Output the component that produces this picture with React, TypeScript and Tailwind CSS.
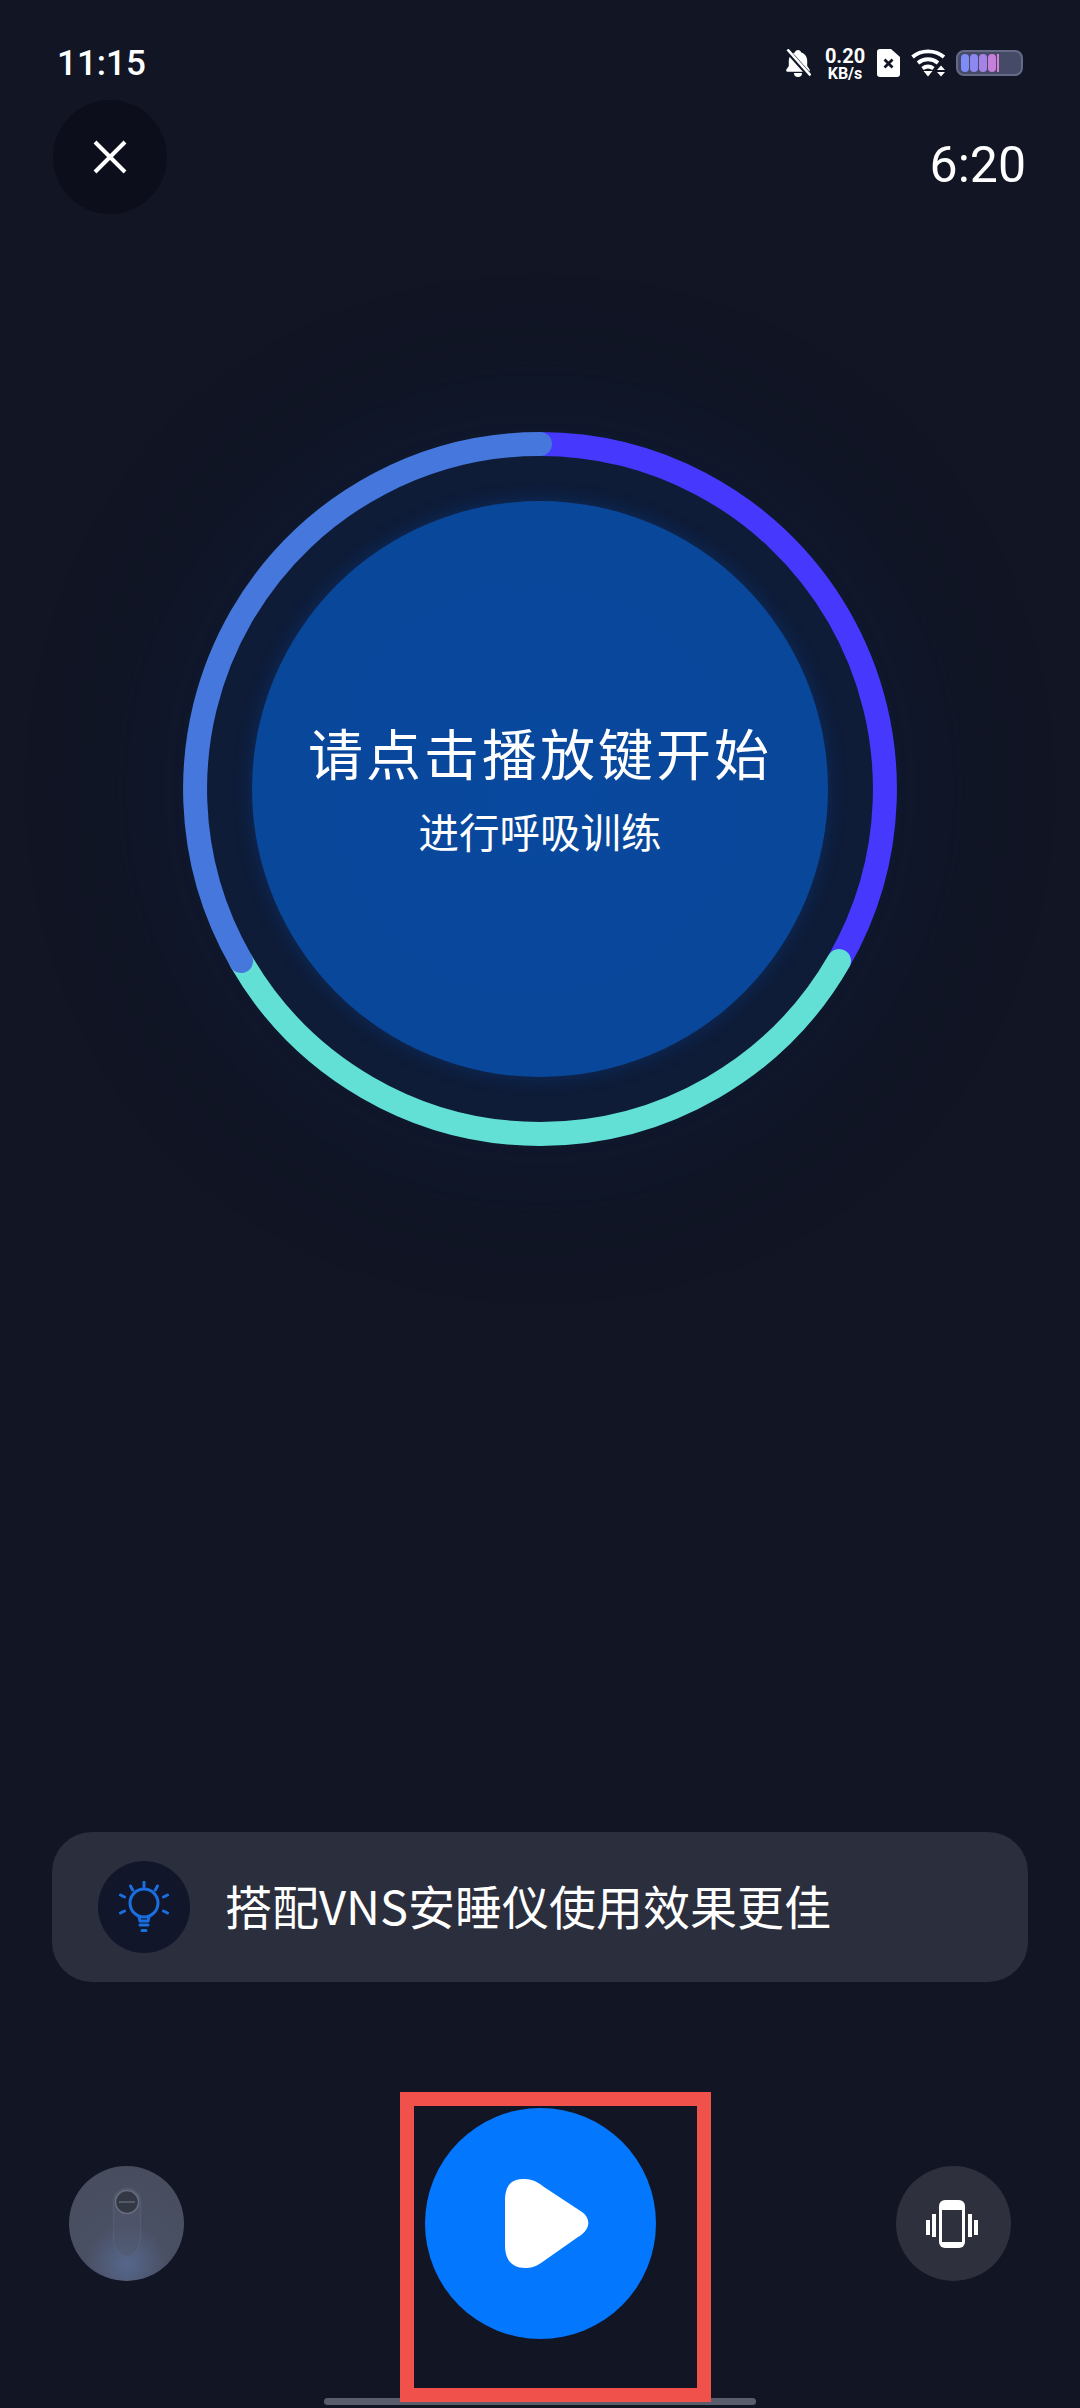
import React from "react";

const CJK = "font-['Noto_Sans_CJK_SC','Noto_Sans',sans-serif]";

function BellOff() {
  return (
    <svg width="26" height="28" viewBox="0 0 26 28" className="text-white">
      <path
        d="M13 1c-1.600 0-2.800 1-3.200 2.400C5.800 4.600 3.800 8 3.800 12v5L1.400 20.500c-.7 1 0 2.300 1.100 2.300h21c1.100 0 1.800-1.300 1.100-2.300L22.200 17v-5c0-4-2-7.400-6-8.600C15.800 2 14.600 1 13 1z"
        fill="currentColor"
      />
      <path d="M9 24a4 4 0 0 0 8 0z" fill="currentColor" />
      <path d="M1 0l24 27" stroke="#111524" strokeWidth="5" />
      <path d="M2.500 0.500l23 26" stroke="currentColor" strokeWidth="2.600" />
    </svg>
  );
}

function SimOff() {
  return (
    <svg width="23" height="28" viewBox="0 0 23 28">
      <path d="M3 0h11l9 8v17a3 3 0 0 1-3 3H3a3 3 0 0 1-3-3V3a3 3 0 0 1 3-3z" fill="#fff" />
      <path d="M7.500 10.500l8 8M15.500 10.500l-8 8" stroke="#111524" strokeWidth="2.800" />
    </svg>
  );
}

function Wifi() {
  return (
    <svg width="36" height="28" viewBox="0 0 36 28" fill="none" stroke="#fff" strokeWidth="3.800">
      <path d="M1.500 8C10 0.500 24 0.500 33 8" />
      <path d="M7 14c6-5 14-5 20 0" />
      <path d="M11.500 19.500c3.500-2.600 7.500-2.600 11 0" />
      <path d="M12.500 22h9L17 27.500z" fill="#fff" stroke="none" />
      <path d="M26 21h8l-4-4.500zM26 23h8l-4 4.500z" fill="#fff" stroke="none" />
    </svg>
  );
}

function Battery() {
  const cells = ["bg-[#7f8cf5]", "bg-[#8d88f0]", "bg-[#a583e6]", "bg-[#c77fdc]"];
  return (
    <div className="flex h-[26px] w-[67px] items-center gap-[1px] rounded-[8px] border-[2px] border-[#666a86] bg-[#454a66] px-[3px]">
      {cells.map((cell) => (
        <div key={cell} className={`h-[18px] w-[8px] rounded-full ${cell}`} />
      ))}
      <div className="h-[18px] w-[2px] bg-[#d77fd0]" />
    </div>
  );
}

function StatusBar() {
  return (
    <div className="flex h-[38px] items-center justify-between pl-[57px] pr-[57px]">
      <span className="font-['Roboto',sans-serif] text-[35px] font-medium leading-none text-white">
        11:15
      </span>
      <div className="flex items-center">
        <BellOff />
        <div className="ml-[10px] flex w-[48px] flex-col items-center font-['Roboto',sans-serif] font-bold text-white">
          <span className="text-[20px] leading-[20px]">0.20</span>
          <span className="text-[16px] leading-[15px]">KB/s</span>
        </div>
        <div className="ml-[8px] flex">
          <SimOff />
        </div>
        <div className="ml-[11px] flex">
          <Wifi />
        </div>
        <div className="ml-[9px]">
          <Battery />
        </div>
      </div>
    </div>
  );
}

/**
 * Breathing ring with the three coloured arcs and the prompt in the middle.
 */
function BreathRing() {
  return (
    <div className="relative mx-auto mt-[218px] flex h-[714px] w-[714px] items-center justify-center rounded-full bg-[#0e1c38] shadow-[0_0_110px_40px_rgba(13,32,66,0.35)]">
      <div className="flex h-[576px] w-[576px] flex-col items-center rounded-full bg-[radial-gradient(circle,#08489e_0%,#09479a_72%,#0c3d7e_100%)] pt-[215px] text-white shadow-[0_0_14px_4px_rgba(12,50,110,0.5)]">
        <span className={`${CJK} text-[55px] leading-[70px] tracking-[3px]`}>请点击播放键开始</span>
        <span className={`${CJK} mt-[20px] text-[40.500px] leading-[50px]`}>进行呼吸训练</span>
      </div>
      <svg className="absolute inset-0" width="714" height="714" viewBox="-357 -357 714 714" fill="none">
        <path d="M0 -345A345 345 0 0 1 299 172" stroke="#4638fc" strokeWidth="24" />
        <path d="M299 172A345 345 0 0 1 -299 172" stroke="#62e0d6" strokeWidth="24" strokeLinecap="round" />
        <path d="M-299 172A345 345 0 0 1 0 -345" stroke="#4577dc" strokeWidth="24" strokeLinecap="round" />
      </svg>
    </div>
  );
}

function BulbIcon() {
  return (
    <svg width="50" height="52" viewBox="0 0 50 52" fill="none" stroke="#1a6fe0" strokeLinecap="round">
      <circle cx="25" cy="22" r="14" strokeWidth="3" />
      <path d="M20 36l1 4h8l1-4" strokeWidth="3" />
      <path d="M21 44h8M23 49.500h4" strokeWidth="3" />
      <path d="M25 1v4.500M11.500 5l2.200 4M38.500 5l-2.200 4M1.500 14l4 2M48.500 14l-4 2M1.500 32l4-2M48.500 32l-4-2" strokeWidth="3" />
    </svg>
  );
}

function TipCard() {
  return (
    <div className="mx-[52px] mt-[686px] flex h-[150px] items-center rounded-[40px] bg-[#2b2e3c] pl-[46px]">
      <div className="flex h-[92px] w-[92px] items-center justify-center rounded-full bg-[#11162a]">
        <BulbIcon />
      </div>
      <span className={`${CJK} mb-[5px] ml-[35px] text-[47px] font-normal leading-none text-white`}>
        搭配VNS安睡仪使用效果更佳
      </span>
    </div>
  );
}

function DeviceIcon() {
  return (
    <svg width="30" height="72" viewBox="0 0 30 72" fill="none">
      <path d="M1.500 15a13.500 13.500 0 0 1 27 0v36c0 8-6 18-13.500 18S1.500 59 1.500 51z" fill="#50586e" fillOpacity="0.55" stroke="#5c6276" strokeOpacity="0.6" strokeWidth="1.500" />
      <circle cx="15" cy="15" r="11.500" fill="#343845" stroke="#686e7e" strokeWidth="1.500" />
      <path d="M7 15h16" stroke="#767c8c" strokeWidth="1" />
    </svg>
  );
}

function VibrateIcon() {
  return (
    <svg width="52" height="48" viewBox="0 0 52 48">
      <rect x="13" y="0" width="26" height="48" rx="6" fill="#fff" />
      <rect x="16" y="10" width="20" height="32" fill="#2e303d" />
      <rect x="6" y="14" width="4" height="23" fill="#fff" />
      <rect x="0" y="20" width="4" height="15" fill="#fff" />
      <rect x="42" y="14" width="4" height="23" fill="#fff" />
      <rect x="48" y="20" width="4" height="15" fill="#fff" />
    </svg>
  );
}

function Controls() {
  return (
    <div className="mt-[126px] flex h-[231px] items-center justify-between px-[69px]">
      <div className="flex h-[115px] w-[115px] items-center justify-center rounded-full bg-[radial-gradient(circle_at_50%_85%,#56678c_0%,#4a5064_35%,#474c5c_100%)] pb-[2px]">
        <DeviceIcon />
      </div>
      <div className="flex h-[231px] w-[231px] items-center justify-center rounded-full bg-[#0477ff] pl-[14px]">
        <svg width="84" height="89" viewBox="0 0 84 89">
          <path
            d="M0 22C0 4 8 0 20 0C28 0 34 4 39 8L77 33C86 39 86 51 73 58L36 84C30 88 26 89 20 89C8 89 0 82 0 66Z"
            fill="#fff"
          />
        </svg>
      </div>
      <div className="flex h-[115px] w-[115px] items-center justify-center rounded-full bg-[#2e303d] pr-[3px]">
        <VibrateIcon />
      </div>
    </div>
  );
}

export default function App() {
  return (
    <div className="relative h-[2408px] w-[1080px] overflow-hidden bg-[#111524] pt-[44px]">
      <StatusBar />
      <div className="mt-[18px] flex items-start justify-between pl-[53px] pr-[54px]">
        <div className="flex h-[114px] w-[114px] items-center justify-center rounded-full bg-[#0c0f1b]">
          <svg width="34" height="34" viewBox="0 0 34 34" stroke="#fff" strokeWidth="4">
            <path d="M2 2l30 30M32 2L2 32" />
          </svg>
        </div>
        <span className="mt-[38px] font-['Roboto',sans-serif] text-[50px] leading-[54px] text-white">6:20</span>
      </div>
      <BreathRing />
      <TipCard />
      <Controls />
      {/* home indicator and the red annotation box sit on top of the page */}
      <div className="absolute left-[324px] top-[2398px] h-[7px] w-[432px] rounded-full bg-[#5a5e6c]" />
      <div className="absolute left-[400px] top-[2092px] h-[310px] w-[311px] border-[14px] border-[#f0524b]" />
    </div>
  );
}
